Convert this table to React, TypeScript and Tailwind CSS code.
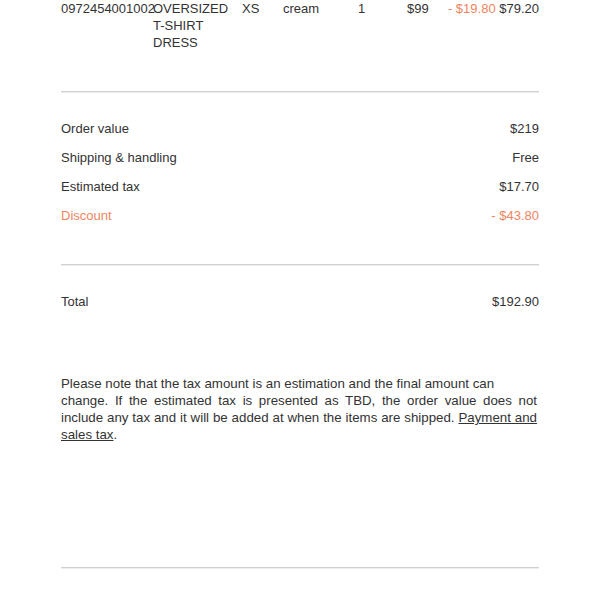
import React from "react";

const summary = [
    { label: "Order value", value: "$219" },
    { label: "Shipping & handling", value: "Free" },
    { label: "Estimated tax", value: "$17.70" },
    { label: "Discount", value: "- $43.80", accent: true },
];

const Divider = () => (
    <div className="h-0 border-t border-b border-t-[#cfcfcf] border-b-[#eeeeee]" />
);

export default function App() {
    return (
        <div className="w-[600px] h-[600px] overflow-hidden bg-white px-[61px] text-[13px] leading-[17px] text-[#333] font-['Liberation_Sans',Arial,sans-serif]">
            {/* item row */}
            <div className="flex items-start">
                <div className="w-[92px] shrink-0 whitespace-nowrap">0972454001002</div>
                <div className="w-[89px] shrink-0 uppercase">
                    Oversized
                    <br />
                    T-shirt
                    <br />
                    Dress
                </div>
                <div className="w-[41px] shrink-0">XS</div>
                <div className="w-[75px] shrink-0">cream</div>
                <div className="w-[49px] shrink-0">1</div>
                <div className="w-[40px] shrink-0">$99</div>
                <div className="flex-1 text-right whitespace-nowrap">
                    <span className="text-[#ee8560]">- $19.80</span> $79.20
                </div>
            </div>

            <div className="mt-[40px]">
                <Divider />
            </div>

            {/* summary */}
            <div className="mt-[27px] flex flex-col gap-[12px]">
                {summary.map((row) => (
                    <div
                        key={row.label}
                        className={`flex justify-between ${row.accent ? "text-[#ee8560]" : ""}`}
                    >
                        <span>{row.label}</span>
                        <span>{row.value}</span>
                    </div>
                ))}
            </div>

            <div className="mt-[40px]">
                <Divider />
            </div>

            <div className="mt-[27px] flex justify-between">
                <span>Total</span>
                <span>$192.90</span>
            </div>

            <p className="mt-[65px] w-[476px] text-[13.3px] text-justify">
                Please note that the tax amount is an estimation and the final amount can
                <br />
                change. If the estimated tax is presented as TBD, the order value does not
                include any tax and it will be added at when the items are shipped.{" "}
                <a href="#" className="underline">Payment and sales tax</a>.
            </p>

            <div className="mt-[124px]">
                <Divider />
            </div>

            <div className="mt-[27px] flex gap-[60px]">
                <span>Delivery address</span>
                <span>Payment method</span>
            </div>
        </div>
    );
}
